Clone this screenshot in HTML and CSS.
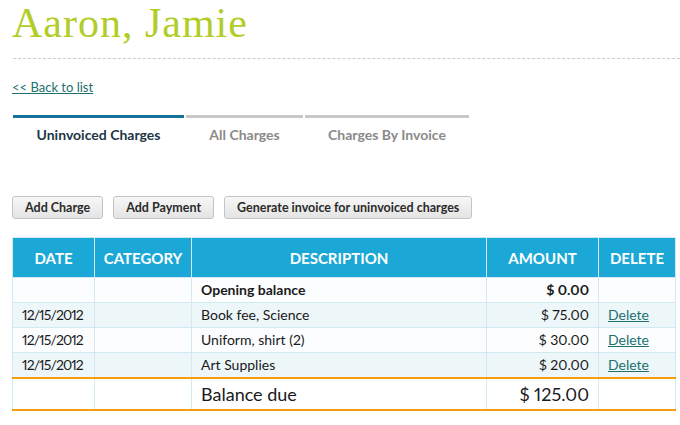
FILE: index.html
```html
<!DOCTYPE html>
<html>
<head>
<meta charset="utf-8">
<link rel="stylesheet" href="styles.css">
</head>
<body>
<div class="page">
  <h1 class="title">Aaron, Jamie</h1>
  <div class="rule"></div>
  <a class="back" href="#">&lt;&lt; Back to list</a>
  <nav class="tabs">
    <a class="tab tab-active" href="#">Uninvoiced Charges</a>
    <a class="tab tab-all" href="#">All Charges</a>
    <a class="tab tab-inv" href="#">Charges By Invoice</a>
  </nav>
  <div class="actions">
    <button class="btn">Add Charge</button>
    <button class="btn">Add Payment</button>
    <button class="btn">Generate invoice for uninvoiced charges</button>
  </div>
  <table class="charges">
    <colgroup>
      <col class="c-date"><col class="c-cat"><col class="c-desc"><col class="c-amt"><col class="c-del">
    </colgroup>
    <thead>
      <tr><th>DATE</th><th>CATEGORY</th><th>DESCRIPTION</th><th>AMOUNT</th><th>DELETE</th></tr>
    </thead>
    <tbody>
      <tr class="odd"><td></td><td></td><td class="strong">Opening balance</td><td class="amt strong">$ 0.00</td><td></td></tr>
      <tr class="even"><td class="date">12/15/2012</td><td></td><td>Book fee, Science</td><td class="amt">$ 75.00</td><td><a class="del" href="#">Delete</a></td></tr>
      <tr class="odd"><td class="date">12/15/2012</td><td></td><td>Uniform, shirt (2)</td><td class="amt">$ 30.00</td><td><a class="del" href="#">Delete</a></td></tr>
      <tr class="even"><td class="date">12/15/2012</td><td></td><td>Art Supplies</td><td class="amt">$ 20.00</td><td><a class="del" href="#">Delete</a></td></tr>
    </tbody>
    <tfoot>
      <tr><td></td><td></td><td class="big">Balance due</td><td class="amt big">$ 125.00</td><td></td></tr>
    </tfoot>
  </table>
</div>
</body>
</html>
```
FILE: styles.css
```css
html, body { margin: 0; padding: 0; background: #fff; }
body { font-family: Lato, "Open Sans", sans-serif; color: #1a1a1a; }
.page { padding: 0 0 0 12px; }
.title {
  margin: 0;
  font-family: "Liberation Serif", serif;
  font-weight: normal;
  font-size: 42px;
  line-height: 46px;
  letter-spacing: 1px;
  color: #b0cd28;
}
.rule { margin: 12px 0 0 1px; border-top: 1px dashed #cccccc; }
.back {
  display: inline-block;
  margin-top: 20px;
  font-size: 13px;
  line-height: 16px;
  color: #20706e;
  text-decoration: underline;
}
.tabs { display: flex; gap: 2px; margin: 20px 0 0 1px; }
.tab {
  display: block;
  border-top: 3px solid #c8c8c8;
  padding-top: 9px;
  font-size: 14px;
  font-weight: bold;
  line-height: 16px;
  text-align: center;
  color: #8a8a8a;
  text-decoration: none;
}
.tab-active { width: 171px; border-top-color: #17729a; color: #1d3645; }
.tab-all { width: 117px; }
.tab-inv { width: 164px; }
.actions { display: flex; gap: 10px; margin-top: 53px; }
.btn {
  height: 23px;
  padding: 0 12px;
  border: 1px solid #c4c4c4;
  border-radius: 3px;
  background: linear-gradient(#f7f7f7, #e4e4e4);
  font-family: Lato, sans-serif;
  font-size: 12.5px;
  font-weight: bold;
  color: #2a2a2a;
}
.charges {
  margin-top: 18px;
  width: 663px;
  table-layout: fixed;
  border-collapse: collapse;
  font-size: 14px;
  font-variant-numeric: proportional-nums;
}
.c-date { width: 82px; }
.c-cat { width: 97px; }
.c-desc { width: 295px; }
.c-amt { width: 112px; }
.c-del { width: 77px; }
.charges th {
  height: 39px;
  padding: 0;
  background: #1ba8d6;
  color: #fff;
  font-size: 15px;
  font-weight: bold;
  text-align: center;
  border: 1px solid #d2e9f2;
  border-bottom: none;
}
.charges td {
  height: 24px;
  padding: 0 9px;
  border: 1px solid #d2e9f2;
  line-height: 16px;
  white-space: nowrap;
}
.charges td.date { letter-spacing: -0.9px; }
.charges tr.odd td { background: #fbfdfe; }
.charges tr.even td { background: #edf6f9; }
.charges td.amt { text-align: right; }
.charges td.strong { font-weight: bold; }
.del { color: #20706e; text-decoration: underline; }
.charges tfoot td {
  height: 30px;
  background: #fff;
  border-top: 2px solid #f59d0f;
  border-bottom: 2px solid #f59d0f;
}
.charges td.big { font-size: 18px; }
```
